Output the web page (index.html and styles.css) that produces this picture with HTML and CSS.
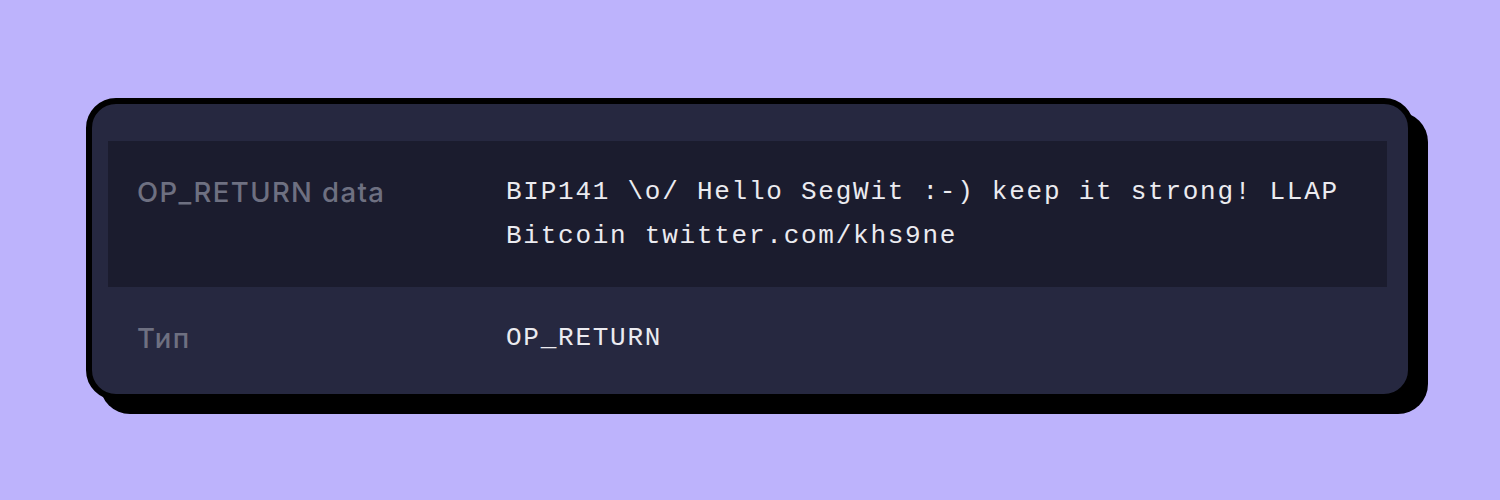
FILE: index.html
```html
<!DOCTYPE html>
<html lang="ru">
<head>
<meta charset="utf-8">
<title>OP_RETURN</title>
<link rel="stylesheet" href="styles.css">
</head>
<body>
<div class="page">
  <div class="card">
    <div class="row row-dark">
      <div class="label">OP_RETURN data</div>
      <div class="value">BIP141 \o/ Hello SegWit :-) keep it strong! LLAP Bitcoin twitter.com/khs9ne</div>
    </div>
    <div class="row">
      <div class="label">Тип</div>
      <div class="value">OP_RETURN</div>
    </div>
  </div>
</div>
</body>
</html>
```

FILE: styles.css
```css
html, body {
  margin: 0;
  padding: 0;
  background: #bdb3fc;
}
.page {
  width: 1500px;
  height: 500px;
  box-sizing: border-box;
  padding: 98px 86px 0 86px;
}
.card {
  background: #262840;
  border: 6px solid #000;
  border-radius: 30px;
  box-shadow: 14px 14px 0 #000;
  padding: 37px 21px 5px 16px;
}
.row {
  display: grid;
  grid-template-columns: 369px 1fr;
  padding: 29px 29px;
}
.row-dark {
  background: #1b1c2e;
}
.label {
  font-family: Inter, "Noto Sans", sans-serif;
  font-size: 27.5px;
  font-weight: 500;
  letter-spacing: 1.4px;
  line-height: 44px;
  color: #6e7081;
}
.value {
  font-family: "Liberation Mono", "Courier New", monospace;
  font-size: 26px;
  letter-spacing: 1.75px;
  line-height: 44px;
  color: #ebebf0;
}
```
